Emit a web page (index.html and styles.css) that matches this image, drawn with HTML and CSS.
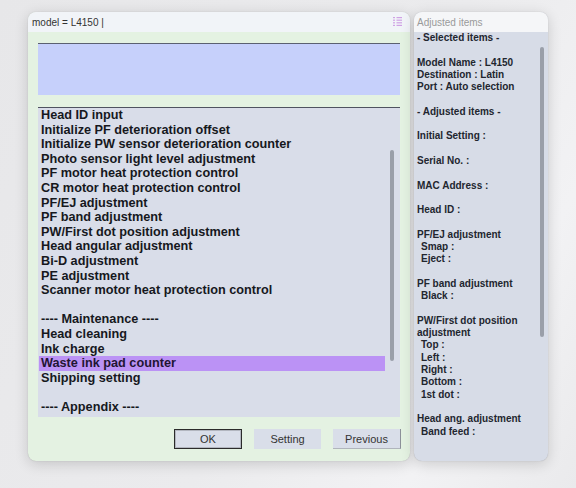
FILE: index.html
```html
<!DOCTYPE html>
<html>
<head>
<meta charset="utf-8">
<link rel="stylesheet" href="styles.css">
</head>
<body>
<div class="desk">
  <div class="win main">
    <div class="titlebar">
      <span class="title">model = L4150 |</span>
      <svg class="grip" width="9" height="9" viewBox="0 0 9 9">
        <g fill="#cfa2e4">
          <rect x="0" y="0" width="2" height="1.2"/><rect x="3.5" y="0" width="5.5" height="1.2"/>
          <rect x="0" y="2.6" width="2" height="1.2"/><rect x="3.5" y="2.6" width="5.5" height="1.2"/>
          <rect x="0" y="5.2" width="2" height="1.2"/><rect x="3.5" y="5.2" width="5.5" height="1.2"/>
          <rect x="0" y="7.8" width="2" height="1.2"/><rect x="3.5" y="7.8" width="5.5" height="1.2"/>
        </g>
      </svg>
    </div>
    <div class="main-body">
      <div class="msg"></div>
      <div class="list">
        <div class="items">
          <div class="item">Head ID input</div>
          <div class="item">Initialize PF deterioration offset</div>
          <div class="item">Initialize PW sensor deterioration counter</div>
          <div class="item">Photo sensor light level adjustment</div>
          <div class="item">PF motor heat protection control</div>
          <div class="item">CR motor heat protection control</div>
          <div class="item">PF/EJ adjustment</div>
          <div class="item">PF band adjustment</div>
          <div class="item">PW/First dot position adjustment</div>
          <div class="item">Head angular adjustment</div>
          <div class="item">Bi-D adjustment</div>
          <div class="item">PE adjustment</div>
          <div class="item">Scanner motor heat protection control</div>
          <div class="item">&nbsp;</div>
          <div class="item">---- Maintenance ----</div>
          <div class="item">Head cleaning</div>
          <div class="item">Ink charge</div>
          <div class="item selected">Waste ink pad counter</div>
          <div class="item">Shipping setting</div>
          <div class="item">&nbsp;</div>
          <div class="item">---- Appendix ----</div>
        </div>
        <div class="track"><div class="thumb list-thumb"></div></div>
      </div>
      <div class="buttons">
        <div class="btn btn-ok">OK</div>
        <div class="btn btn-setting">Setting</div>
        <div class="btn btn-prev">Previous</div>
      </div>
    </div>
  </div>
  <div class="win side">
    <div class="titlebar side-title">
      <span class="title muted">Adjusted items</span>
    </div>
    <div class="side-body">
      <div class="lines">
        <div class="ln">- Selected items -</div>
        <div class="ln">&nbsp;</div>
        <div class="ln">Model Name : L4150</div>
        <div class="ln">Destination : Latin</div>
        <div class="ln">Port : Auto selection</div>
        <div class="ln">&nbsp;</div>
        <div class="ln">- Adjusted items -</div>
        <div class="ln">&nbsp;</div>
        <div class="ln">Initial Setting :</div>
        <div class="ln">&nbsp;</div>
        <div class="ln">Serial No. :</div>
        <div class="ln">&nbsp;</div>
        <div class="ln">MAC Address :</div>
        <div class="ln">&nbsp;</div>
        <div class="ln">Head ID :</div>
        <div class="ln">&nbsp;</div>
        <div class="ln">PF/EJ adjustment</div>
        <div class="ln sub">Smap :</div>
        <div class="ln sub">Eject :</div>
        <div class="ln">&nbsp;</div>
        <div class="ln">PF band adjustment</div>
        <div class="ln sub">Black :</div>
        <div class="ln">&nbsp;</div>
        <div class="ln">PW/First dot position</div>
        <div class="ln">adjustment</div>
        <div class="ln sub">Top :</div>
        <div class="ln sub">Left :</div>
        <div class="ln sub">Right :</div>
        <div class="ln sub">Bottom :</div>
        <div class="ln sub">1st dot :</div>
        <div class="ln">&nbsp;</div>
        <div class="ln">Head ang. adjustment</div>
        <div class="ln sub">Band feed :</div>
      </div>
      <div class="track side-track"><div class="thumb side-thumb"></div></div>
    </div>
  </div>
</div>
</body>
</html>
```
FILE: styles.css
```css
html, body {
  margin: 0;
  padding: 0;
}
body {
  width: 576px;
  height: 488px;
  overflow: hidden;
  background: linear-gradient(120deg, #e7e7e9 0%, #ebebed 55%, #f2f2f4 80%, #eaeaec 100%);
  font-family: "Liberation Sans", Arial, sans-serif;
}
.desk {
  display: flex;
  gap: 4px;
  padding: 12px 0 0 28px;
}
.win {
  height: 449px;
  border-radius: 8px;
  overflow: hidden;
  box-shadow: 0 3px 14px rgba(0, 0, 0, 0.16), 0 0 1px rgba(0, 0, 0, 0.25);
  display: flex;
  flex-direction: column;
}
.main {
  width: 382px;
  background: #e4f2e2;
}
.side {
  width: 134px;
  background: #d7dce7;
}
.titlebar {
  height: 20px;
  flex: none;
  display: flex;
  align-items: center;
  justify-content: space-between;
  padding: 0 8px 0 4px;
  background: #f1f4f8;
}
.side-title {
  background: #f5f6f8;
  padding-left: 3px;
}
.title {
  font-size: 10px;
  color: #333;
}
.muted {
  color: #9a9a9a;
}
.grip {
  display: block;
  margin-top: -1px;
}
.main-body {
  flex: 1;
  display: flex;
  flex-direction: column;
  padding: 11px 10px 12px 10px;
}
.msg {
  height: 51px;
  background: #c6d0fb;
  border-top: 1px solid #5b6070;
}
.list {
  margin-top: 12px;
  height: 309px;
  background: #d9dde9;
  border-top: 1px solid #4f5360;
  display: flex;
  padding-left: 1px;
}
.items {
  width: 346px;
}
.item {
  height: 14.6px;
  line-height: 14.6px;
  font-size: 12.7px;
  font-weight: bold;
  color: #16181d;
  padding-left: 2px;
  white-space: nowrap;
}
.item.selected {
  background: #bb92f5;
  color: #221533;
}
.track {
  flex: 1;
}
.thumb {
  width: 4px;
  border-radius: 2px;
  background: #9a9fa9;
}
.list-thumb {
  margin: 42px 0 0 5px;
  height: 211px;
}
.buttons {
  margin-top: 12px;
  height: 20px;
  display: flex;
  justify-content: flex-end;
  gap: 12px;
  margin-right: -1px;
}
.btn {
  width: 68px;
  height: 20px;
  box-sizing: border-box;
  display: flex;
  align-items: center;
  justify-content: center;
  font-size: 11px;
  color: #333;
  background: #d9dee9;
}
.btn-ok {
  border: 1px solid #2b2b2b;
  box-shadow: inset 0 0 0 1px rgba(0, 0, 0, 0.18);
}
.btn-setting {
  width: 67px;
}
.btn-prev {
  border-right: 1px solid #8c9099;
  border-bottom: 1px solid #b0b4bc;
}
.side-body {
  flex: 1;
  display: flex;
}
.lines {
  flex: 1;
  padding-left: 3px;
}
.ln {
  height: 12.3px;
  line-height: 12.3px;
  font-size: 10px;
  font-weight: bold;
  color: #22262f;
  white-space: nowrap;
}
.ln.sub {
  padding-left: 4px;
}
.side-track {
  flex: none;
  width: 8px;
}
.side-thumb {
  margin-top: 15px;
  height: 290px;
}
```
